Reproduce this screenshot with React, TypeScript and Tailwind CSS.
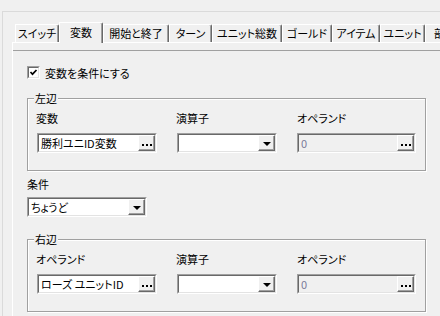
import React from 'react';

type Tab = { label: string; w: number; active?: boolean };

const tabs: Tab[] = [
  { label: 'スイッチ', w: 44 },
  { label: '変数', w: 44, active: true },
  { label: '開始と終了', w: 66 },
  { label: 'ターン', w: 43 },
  { label: 'ユニット総数', w: 70 },
  { label: 'ゴールド', w: 50 },
  { label: 'アイテム', w: 48 },
  { label: 'ユニット', w: 45 },
  { label: '部隊', w: 40 },
];

function Sunken({ className = '', disabled = false, children }: { className?: string; disabled?: boolean; children?: React.ReactNode }) {
  return (
    <div className={`border border-t-[#a0a0a0] border-l-[#a0a0a0] border-b-white border-r-white ${className}`}>
      <div
        className={`h-full flex items-center border border-t-[#696969] border-l-[#696969] border-b-[#e3e3e3] border-r-[#e3e3e3] ${
          disabled ? 'bg-[#f0f0f0]' : 'bg-white'
        }`}
      >
        {children}
      </div>
    </div>
  );
}

function RaisedButton({ children }: { children: React.ReactNode }) {
  return (
    <div className="ml-auto h-full w-[17px] shrink-0 flex items-center justify-center bg-[#f0f0f0] border border-t-white border-l-white border-b-[#696969] border-r-[#696969] shadow-[inset_-1px_-1px_0_#a0a0a0]">
      {children}
    </div>
  );
}

function EditWithButton({ value, w, disabled = false }: { value: string; w: string; disabled?: boolean }) {
  return (
    <Sunken className={`${w} h-[20px]`} disabled={disabled}>
      <span className={`pl-[2px] whitespace-nowrap leading-none ${disabled ? 'text-[#7b7b9a]' : 'text-black'}`}>{value}</span>
      <RaisedButton>
        <div className="flex gap-[2px] mt-[3px]">
          <div className="w-[2px] h-[2px] bg-black" />
          <div className="w-[2px] h-[2px] bg-black" />
          <div className="w-[2px] h-[2px] bg-black" />
        </div>
      </RaisedButton>
    </Sunken>
  );
}

function Combo({ value = '', w }: { value?: string; w: string }) {
  return (
    <Sunken className={`${w} h-[20px]`}>
      <span className="pl-[2px] whitespace-nowrap leading-none">{value}</span>
      <RaisedButton>
        <div className="w-0 h-0 border-x-[4px] border-t-[4px] border-x-transparent border-t-black mt-[1px]" />
      </RaisedButton>
    </Sunken>
  );
}

function Group({ title, first, firstValue }: { title: string; first: string; firstValue: string }) {
  return (
    <fieldset className="w-[399px] border border-[#a0a0a0] shadow-[inset_1px_1px_0_#fff,1px_1px_0_#fff]">
      <legend className="ml-[6px] px-[1px] leading-[14px] bg-[#f0f0f0]">{title}</legend>
      <div className="grid grid-cols-[140px_121px_1fr] gap-y-[8px] pl-[8px] pt-[6px] pb-[17px]">
        <span className="leading-[14px]">{first}</span>
        <span className="leading-[14px]">演算子</span>
        <span className="leading-[14px]">オペランド</span>
        <div className="ml-[1px]">
          <EditWithButton value={firstValue} w="w-[120px]" />
        </div>
        <div className="ml-[1px]">
          <Combo w="w-[100px]" />
        </div>
        <EditWithButton value="0" w="w-[119px]" disabled />
      </div>
    </fieldset>
  );
}

export default function App() {
  return (
    <div className="w-[440px] h-[316px] overflow-hidden bg-[#f0f0f0] text-[11px] text-black font-['Noto_Sans_CJK_JP',sans-serif] [font-feature-settings:'palt']">
      <div className="mt-[11px] ml-[2px] h-[305px] border-t border-l border-[#dadada]">
        <div className="ml-[9px] mt-[10px]">
          {/* Tabs */}
          <div className="flex items-end h-[20px] pl-[3px]">
            {tabs.map((t) =>
              t.active ? (
                <div
                  key={t.label}
                  style={{ width: t.w }}
                  className="relative z-10 -mb-[1px] h-[21px] shrink-0 flex items-center justify-center whitespace-nowrap bg-[#f0f0f0] border-t border-l border-r border-t-white border-l-white border-r-[#696969] rounded-tr-[2px] shadow-[inset_-1px_0_0_#a0a0a0]"
                >
                  <span className="-mt-[2px]">{t.label}</span>
                </div>
              ) : (
                <div
                  key={t.label}
                  style={{ width: t.w }}
                  className="h-[18px] shrink-0 flex items-center justify-center whitespace-nowrap overflow-hidden border-t border-l border-r border-t-white border-l-white border-r-[#696969] rounded-tr-[2px] shadow-[inset_-1px_0_0_#a0a0a0]"
                >
                  {t.label}
                </div>
              )
            )}
          </div>

          {/* Panel */}
          <div className="border-t border-l border-white h-[280px]">
            <div className="mt-[7px] border-t border-[#a0a0a0] pl-[14px] pt-[15px]">
              <div className="flex items-center gap-[5px] h-[13px]">
                <Sunken className="w-[13px] h-[13px]">
                  <svg width="9" height="9" viewBox="0 0 9 9" className="mx-auto">
                    <polyline points="1.5,4 3.5,6.2 7.5,2" fill="none" stroke="#000" strokeWidth="1.7" />
                  </svg>
                </Sunken>
                <span className="leading-[14px]">変数を条件にする</span>
              </div>

              <div className="mt-[12px]">
                <Group title="左辺" first="変数" firstValue="勝利ユニID変数" />
              </div>

              <div className="mt-[6px] leading-[14px]">条件</div>
              <div className="mt-[6px]">
                <Combo value="ちょうど" w="w-[120px]" />
              </div>

              <div className="mt-[15px]">
                <Group title="右辺" first="オペランド" firstValue="ローズ ユニットID" />
              </div>
            </div>
          </div>
        </div>
      </div>
    </div>
  );
}
